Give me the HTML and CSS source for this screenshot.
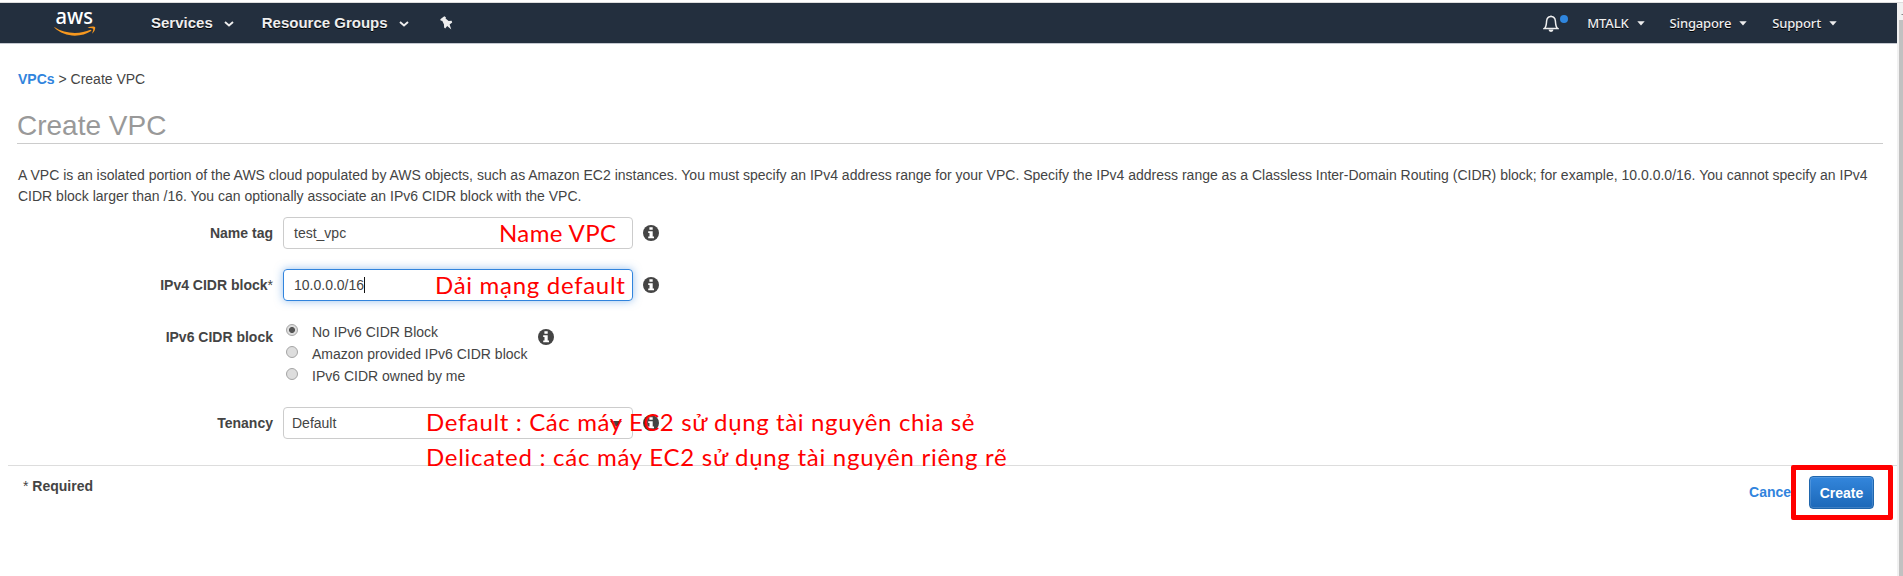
FILE: index.html
```html
<!DOCTYPE html>
<html lang="en">
<head>
<meta charset="utf-8">
<title>Create VPC</title>
<link rel="stylesheet" href="styles.css">
</head>
<body>
<div class="window">
<div class="page">
  <header class="nav">
    <svg class="logo" viewBox="0 0 42 34" width="42" height="34">
      <text class="logo-text" x="1.5" y="18" textLength="37.5" lengthAdjust="spacingAndGlyphs">aws</text>
      <path class="smile" d="M0.3 21 C11 28.2 26 28.4 36.5 23.8 L37.6 24.8 C27 32 10 31.5 0.3 21.6Z"/>
      <path class="smile" d="M33.5 21.6 C36.5 20.3 40.8 20.2 41.2 21.3 C41.4 23.5 40.2 26 38 27.8 C38.8 25.6 39.6 23.6 39.2 22.8 C38 22.2 36 22.3 33.5 21.6Z"/>
    </svg>
    <nav class="main-menu">
      <a class="main-item services">Services <svg class="chev" viewBox="0 0 10 6" width="10" height="6"><path d="M1 1l4 3.5L9 1"/></svg></a>
      <a class="main-item">Resource Groups <svg class="chev" viewBox="0 0 10 6" width="10" height="6"><path d="M1 1l4 3.5L9 1"/></svg></a>
      <svg class="pin" viewBox="0 0 13 14" width="13" height="14"><path d="M0.3 3.2L4.3 0.3L5.9 1.2L5.6 2.4L8.6 5L11.6 4.8L12.2 6.4L9.6 8.4L11.3 13.4L7.2 10L5.2 12.4L4.1 11.6L4 8.4L2.2 4.8L0.8 4.8Z"/></svg>
    </nav>
    <nav class="side-menu">
      <div class="bell">
        <svg viewBox="0 0 16 17" width="16" height="17"><path class="bell-body" d="M8 0.4V1.5M1.2 13.6C3.4 12 3.3 9.5 3.6 6C4 3 5.5 1.6 8 1.6S12 3 12.4 6C12.7 9.5 12.6 12 14.8 13.6Z"/><path class="clapper" d="M5.5 14.6H10.5A2.5 2.4 0 0 1 5.5 14.6Z"/></svg>
        <span class="dot"></span>
      </div>
      <a class="side-item account">MTALK <svg class="tri" viewBox="0 0 8 5" width="8" height="5"><path d="M0.3 0.3H7.7L4 4.4Z"/></svg></a>
      <a class="side-item region">Singapore <svg class="tri" viewBox="0 0 8 5" width="8" height="5"><path d="M0.3 0.3H7.7L4 4.4Z"/></svg></a>
      <a class="side-item">Support <svg class="tri" viewBox="0 0 8 5" width="8" height="5"><path d="M0.3 0.3H7.7L4 4.4Z"/></svg></a>
    </nav>
  </header>
  <main class="content">
    <div class="crumbs"><a class="link">VPCs</a> &gt; Create VPC</div>
    <h1 class="title">Create VPC</h1>
    <p class="intro">A VPC is an isolated portion of the AWS cloud populated by AWS objects, such as Amazon EC2 instances. You must specify an IPv4 address range for your VPC. Specify the IPv4 address range as a Classless Inter-Domain Routing (CIDR) block; for example, 10.0.0.0/16. You cannot specify an IPv4<br>CIDR block larger than /16. You can optionally associate an IPv6 CIDR block with the VPC.</p>
    <div class="form">
      <div class="row">
        <label class="label">Name tag</label>
        <div class="field">test_vpc<span class="note note-name">Name VPC</span></div>
        <svg class="info" viewBox="0 0 16 16" width="16" height="16"><circle cx="8" cy="8" r="8"/><path d="M6.4 2.2H9.7V4.7H6.4ZM5.2 6.2H9.7V11.4H11V13.2H5.2V11.4H6.5V8H5.2Z"/></svg>
      </div>
      <div class="row">
        <label class="label">IPv4 CIDR block<span class="star">*</span></label>
        <div class="field focused">10.0.0.0/16<span class="caret"></span><span class="note note-range">Dải mạng default</span></div>
        <svg class="info" viewBox="0 0 16 16" width="16" height="16"><circle cx="8" cy="8" r="8"/><path d="M6.4 2.2H9.7V4.7H6.4ZM5.2 6.2H9.7V11.4H11V13.2H5.2V11.4H6.5V8H5.2Z"/></svg>
      </div>
      <div class="row radio-row">
        <label class="label">IPv6 CIDR block</label>
        <div class="radios">
          <div class="option"><span class="radio checked"></span>No IPv6 CIDR Block</div>
          <div class="option"><span class="radio"></span>Amazon provided IPv6 CIDR block</div>
          <div class="option"><span class="radio"></span>IPv6 CIDR owned by me</div>
        </div>
        <svg class="info" viewBox="0 0 16 16" width="16" height="16"><circle cx="8" cy="8" r="8"/><path d="M6.4 2.2H9.7V4.7H6.4ZM5.2 6.2H9.7V11.4H11V13.2H5.2V11.4H6.5V8H5.2Z"/></svg>
      </div>
      <div class="row">
        <label class="label">Tenancy</label>
        <div class="field select">Default<svg class="arrow" viewBox="0 0 12 6" width="12" height="6"><path d="M0 0H12L6 6Z"/></svg>
          <span class="note note-default">Default : Các máy EC2 sử dụng tài nguyên chia sẻ</span>
          <span class="note note-dedicated">Delicated : các máy EC2 sử dụng tài nguyên riêng rẽ</span>
        </div>
        <svg class="info" viewBox="0 0 16 16" width="16" height="16"><circle cx="8" cy="8" r="8"/><path d="M6.4 2.2H9.7V4.7H6.4ZM5.2 6.2H9.7V11.4H11V13.2H5.2V11.4H6.5V8H5.2Z"/></svg>
      </div>
    </div>
  </main>
  <footer class="footer">
    <div class="required"><span class="star">*</span> Required</div>
    <div class="actions">
      <a class="link cancel">Cancel</a>
      <div class="create-wrap"><button class="create">Create</button><span class="highlight"></span></div>
    </div>
  </footer>
</div>
<div class="scrollbar"><svg viewBox="0 0 4 2" width="4" height="2"><path d="M3 1h1v1H2Z"/></svg><div class="thumb"></div></div>
</div>
</body>
</html>
```
FILE: styles.css
```css
* { box-sizing: border-box; }
body {
  margin: 0;
  background: #fff;
  color: #444;
  font: 14px/22px "Liberation Sans", Arial, sans-serif;
  overflow: hidden;
}
.window { display: flex; height: 576px; padding-top: 2px; }
.page { width: 1897px; border-top: 1px solid #ddd; }
.scrollbar {
  width: 6px;
  border-top: 1px solid #ddd;
  background: #f1f1f1;
  padding: 10px 0 0 2px;
  display: flex;
  flex-direction: column;
  overflow: hidden;
}
.scrollbar svg { fill: #888; flex: none; }
.thumb { flex: 1; margin-top: 5px; background: #c1c1c1; }

.nav {
  display: flex;
  align-items: center;
  height: 41px;
  background: #232f3e;
  border-bottom: 1px solid #c4c8d0;
  color: #eee;
  padding: 0 60px 0 54px;
}
.logo { overflow: visible; }
.logo-text { font: 500 21px/24px "Noto Sans", sans-serif; fill: #fff; }
.smile { fill: #f7981f; }
.main-menu { display: flex; align-items: center; margin-left: 55px; }
.main-item {
  display: flex;
  align-items: center;
  font-size: 15px;
  font-weight: bold;
  text-shadow: 0 1px 0 #000;
  margin-right: 28px;
}
.chev { margin: 2px 0 0 11px; fill: none; stroke: #eee; stroke-width: 1.9; }
.pin { fill: #eee; margin-left: 3px; }
.side-menu { display: flex; align-items: center; margin-left: auto; }
.bell { display: flex; margin-right: 19px; }
.bell-body { fill: none; stroke: #eee; stroke-width: 1.5; }
.clapper { fill: #eee; }
.dot { width: 8px; height: 8px; border-radius: 50%; background: #2f86de; margin: 0 0 0 1px; }
.side-item {
  display: flex;
  align-items: center;
  font: 500 13px/20px "Noto Sans", sans-serif;
  letter-spacing: -0.15px;
  text-shadow: 0 1px 0 #000;
}
.account, .region { margin-right: 25px; }
.tri { fill: #eee; margin-left: 8px; }

.content { padding: 0 14px 0 17px; height: 421px; }
.crumbs { padding: 25px 1px 0; line-height: 21px; }
.link { color: #3184dd; font-weight: bold; }
.title {
  margin: 19px 0 0;
  height: 35px;
  font-size: 28px;
  line-height: 34px;
  font-weight: normal;
  color: #999;
  border-bottom: 1px solid #ccc;
}
.intro { margin: 21px 0 10px; padding-left: 1px; line-height: 21px; white-space: nowrap; }
.form { display: flex; flex-direction: column; gap: 20px; }
.row { display: flex; align-items: center; }
.label { width: 256px; text-align: right; font-weight: bold; margin-right: 10px; }
.star { font-weight: normal; }
.field {
  position: relative;
  width: 350px;
  height: 32px;
  line-height: 31px;
  border: 1px solid #ccc;
  border-radius: 4px;
  padding-left: 10px;
  white-space: nowrap;
}
.focused { border-color: #3184dd; box-shadow: 0 0 8px rgba(49, 132, 221, .5); }
.caret { display: inline-block; width: 1px; height: 16px; background: #111; vertical-align: -3px; }
.select { padding-left: 8px; }
.arrow { position: absolute; right: 10px; top: 13px; fill: #444; }
.info { margin-left: 10px; fill: #444; }
.info path { fill: #fff; }
.radio-row { align-items: flex-start; height: 66px; }
.radio-row .label { padding-top: 5px; }
.radio-row .info { margin-top: 8px; }
.option { display: flex; height: 22px; }
.radio {
  width: 12px;
  height: 12px;
  margin: 3px 14px 0 3px;
  border: 1px solid #a5a5a5;
  border-radius: 50%;
  background: #ddd;
}
.checked { background: radial-gradient(circle, #555 2.6px, #ddd 3.4px); }
.note {
  position: absolute;
  z-index: 2;
  color: #f00;
  font: 24px/30px Lato, "Noto Sans", sans-serif;
}
.note-name { left: 215px; top: 0; letter-spacing: 0.4px; }
.note-range { left: 151px; top: 0; letter-spacing: 0.7px; }
.note-default { left: 142px; top: -1px; letter-spacing: 0.63px; }
.note-dedicated { left: 142px; top: 34px; letter-spacing: 0.73px; }

.footer {
  display: flex;
  justify-content: space-between;
  margin: 0 0 0 8px;
  border-top: 1px solid #ddd;
  padding: 9px 23px 0 15px;
}
.required { font-weight: bold; }
.actions { display: flex; margin-top: 1px; }
.cancel { margin: 5px 14px 0 0; }
.create-wrap { position: relative; }
.create {
  width: 65px;
  height: 33px;
  border: 1px solid #1f66ad;
  border-radius: 4px;
  background: linear-gradient(#3386dc, #1c68b8);
  color: #fff;
  font: bold 14px "Liberation Sans", Arial, sans-serif;
  padding: 0;
  box-shadow: inset 0 0 0 1px rgba(255, 255, 255, .15);
}
.highlight {
  position: absolute;
  left: -18px;
  top: -11px;
  width: 102px;
  height: 55px;
  border: 5px solid #f00;
  border-radius: 2px;
}
```
